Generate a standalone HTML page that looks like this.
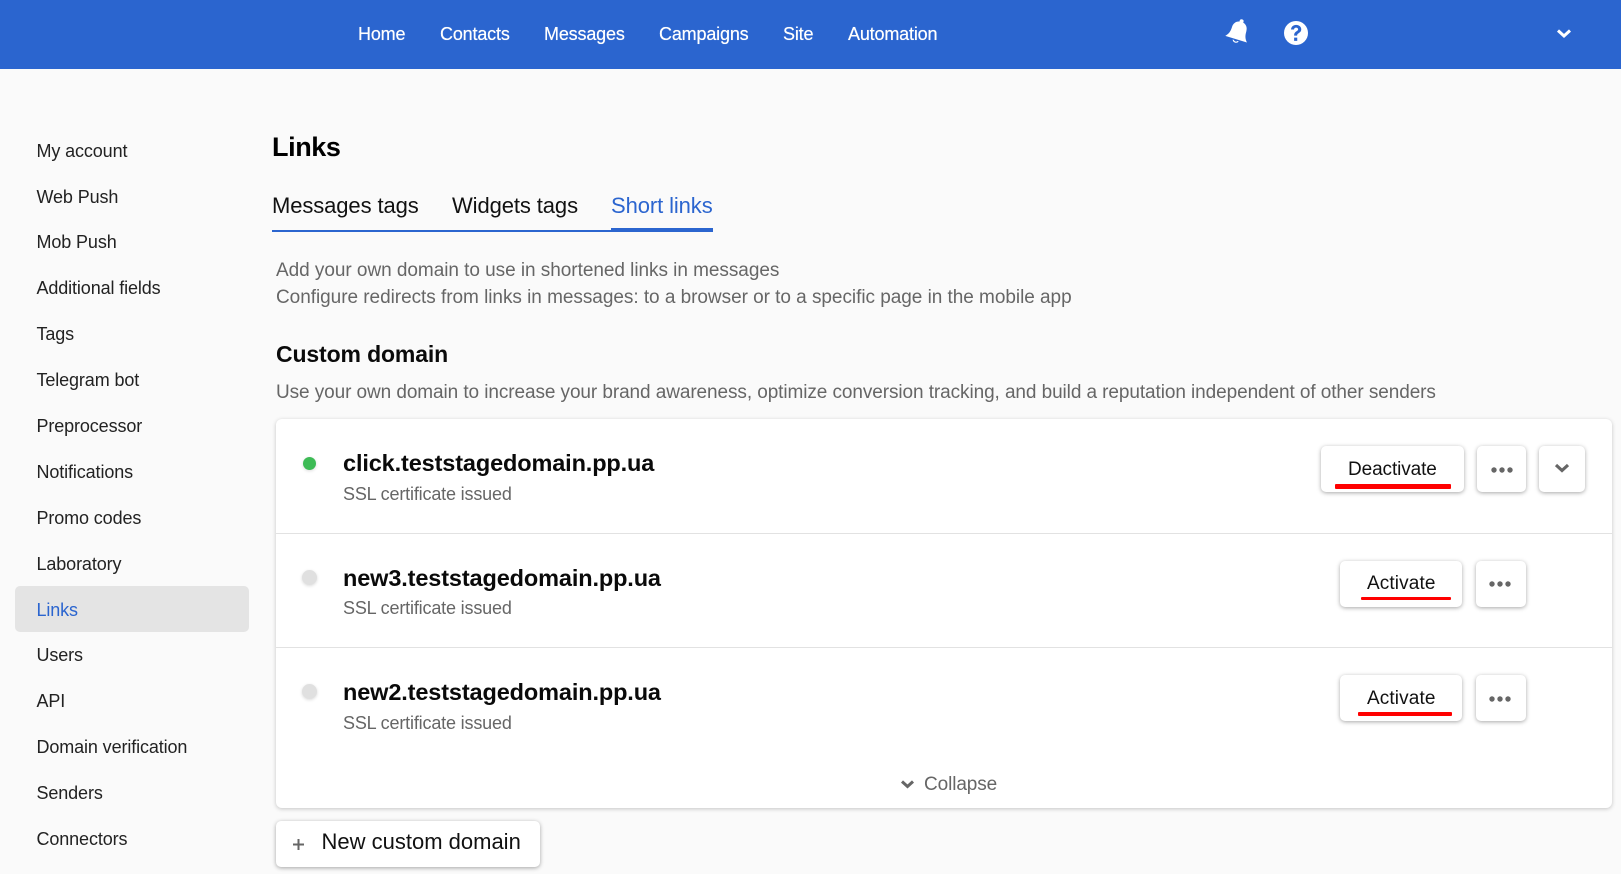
<!DOCTYPE html>
<html lang="en"><head><meta charset="utf-8"><title>Links</title>
<style>
*{box-sizing:border-box}
html,body{margin:0;padding:0}
body{width:1621px;height:874px;overflow:hidden;background:#fafafa;position:relative;font-family:"Liberation Sans",Arial,sans-serif;color:#111}
.t{position:absolute;white-space:nowrap;line-height:30px;height:30px}
.hd{position:absolute;left:0;top:0;width:1621px;height:69px;background:#2b65cf}
.n{color:#fff;font-size:18px;letter-spacing:-.17px;top:19px;text-shadow:0 0 .5px #fff}
.s{left:36.5px;font-size:18px;color:#222;letter-spacing:-.12px}
.g{color:#666;font-size:19px;left:276px}
.b{font-weight:700}
.card{position:absolute;left:276px;top:419px;width:1336px;height:389px;background:#fff;border-radius:6px;box-shadow:0 1px 4px rgba(0,0,0,.22)}
.dv{position:absolute;left:276px;width:1336px;height:1px;background:#e2e2e2}
.btn{position:absolute;height:46px;background:#fff;border-radius:5px;box-shadow:0 1px 4px rgba(0,0,0,.35)}
.dot{position:absolute;border-radius:50%;box-shadow:0 1px 3px rgba(0,0,0,.15)}
.r{position:absolute;background:#f00;border-radius:1px}
.dom{left:343px;font-size:23.5px;font-weight:700;color:#0a0a0a;letter-spacing:-.13px}
.sub{left:343px;font-size:18px;color:#666;letter-spacing:-.17px}
.bt{font-size:19px;color:#111}
.tb{font-size:22px;letter-spacing:-.1px;top:191px}
svg{position:absolute;overflow:visible}
</style></head><body>
<div class="hd"></div>
<div class="t n" style="left:358px">Home</div>
<div class="t n" style="left:440px">Contacts</div>
<div class="t n" style="left:544px">Messages</div>
<div class="t n" style="left:659px">Campaigns</div>
<div class="t n" style="left:783px">Site</div>
<div class="t n" style="left:848px">Automation</div>

<svg style="left:1224px;top:18px" width="28" height="30" viewBox="0 0 26 28"><g fill="#fff" transform="rotate(17 13 14)"><circle cx="13" cy="2.6" r="1.9"/><path d="M13 3.2c-4.6 0-7 3.2-7 7.4 0 4.700-1.500 7.200-3.600 9.400h21.200c-2.100-2.200-3.600-4.700-3.600-9.400 0-4.200-2.400-7.400-7-7.400z"/><path d="M10 21.300a3.200 3.200 0 0 0 6 0h-1.300a1.900 1.900 0 0 1-3.400 0z"/></g></svg>
<svg style="left:1284px;top:21px" width="24" height="24" viewBox="0 0 24 24"><circle cx="12" cy="12" r="12" fill="#fff"/><g transform="translate(12 12) scale(1.25) translate(-12 -12)"><path d="M8 9.200c.2-2.300 1.900-3.700 4.100-3.700 2.300 0 4.100 1.400 4.100 3.500 0 1.700-1 2.500-2.100 3.200-.9.600-1.200 1-1.200 1.900h-2.400c0-1.800.6-2.600 1.800-3.400.9-.6 1.400-1 1.400-1.700 0-.8-.7-1.300-1.600-1.300-1 0-1.600.6-1.700 1.500z" fill="#2b65cf"/><rect x="10.500" y="15.700" width="2.500" height="2.600" fill="#2b65cf"/></g></svg>
<svg style="left:1556px;top:28px" width="16" height="11" viewBox="0 0 16 11"><path d="M2 2.500l6 5.500 6-5.500" fill="none" stroke="#fff" stroke-width="3"/></svg>

<div style="position:absolute;left:15px;top:586px;width:234px;height:46px;background:#e4e4e4;border-radius:5px"></div>
<div class="t s" style="top:136px">My account</div>
<div class="t s" style="top:182px">Web Push</div>
<div class="t s" style="top:227px">Mob Push</div>
<div class="t s" style="top:273px">Additional fields</div>
<div class="t s" style="top:319px">Tags</div>
<div class="t s" style="top:365px">Telegram bot</div>
<div class="t s" style="top:411px">Preprocessor</div>
<div class="t s" style="top:457px">Notifications</div>
<div class="t s" style="top:503px">Promo codes</div>
<div class="t s" style="top:549px">Laboratory</div>
<div class="t s" style="top:595px;color:#2b65cf">Links</div>
<div class="t s" style="top:640px">Users</div>
<div class="t s" style="top:686px">API</div>
<div class="t s" style="top:732px">Domain verification</div>
<div class="t s" style="top:778px">Senders</div>
<div class="t s" style="top:824px">Connectors</div>

<div class="t b" style="left:272px;top:132px;font-size:27px;color:#000;letter-spacing:-.4px">Links</div>
<div class="t tb" style="left:272px;color:#111">Messages tags</div>
<div class="t tb" style="left:452px;color:#111">Widgets tags</div>
<div class="t tb" style="left:611px;color:#2b65cf">Short links</div>
<div style="position:absolute;left:272px;top:230px;width:340px;height:2px;background:#2b65cf"></div>
<div style="position:absolute;left:611px;top:228px;width:102px;height:4px;background:#2b65cf"></div>

<div class="t g" style="top:256px;letter-spacing:-.045px">Add your own domain to use in shortened links in messages</div>
<div class="t g" style="top:283px;letter-spacing:-.04px">Configure redirects from links in messages: to a browser or to a specific page in the mobile app</div>
<div class="t b" style="left:276px;top:339px;font-size:23px;letter-spacing:-.13px;color:#0a0a0a">Custom domain</div>
<div class="t g" style="top:378px;letter-spacing:-.085px">Use your own domain to increase your brand awareness, optimize conversion tracking, and build a reputation independent of other senders</div>

<div class="card"></div>
<div class="dv" style="top:533px"></div>
<div class="dv" style="top:647px"></div>

<div class="dot" style="left:302.500px;top:457px;width:13px;height:13px;background:#3dbb55"></div>
<div class="t dom" style="top:448px">click.teststagedomain.pp.ua</div>
<div class="t sub" style="top:479px">SSL certificate issued</div>
<div class="btn" style="left:1321px;top:446px;width:143px"></div>
<div class="t bt" style="left:1348px;top:455px;letter-spacing:-.1px">Deactivate</div>
<div class="r" style="left:1335px;top:484px;width:116px;height:5px"></div>
<div class="btn" style="left:1477px;top:446px;width:49px"></div>
<svg style="left:1490px;top:466px" width="24" height="8" viewBox="0 0 24 8"><g fill="#666"><circle cx="4" cy="4" r="2.700"/><circle cx="12" cy="4" r="2.700"/><circle cx="20" cy="4" r="2.700"/></g></svg>
<div class="btn" style="left:1539px;top:446px;width:46px"></div>
<svg style="left:1555px;top:463px" width="14" height="11" viewBox="0 0 14 11"><path d="M1 2l6 5.500 6-5.500" fill="none" stroke="#666" stroke-width="3.200"/></svg>

<div class="dot" style="left:301.500px;top:570px;width:15px;height:15px;background:#e0e0e0"></div>
<div class="t dom" style="top:563px">new3.teststagedomain.pp.ua</div>
<div class="t sub" style="top:593px">SSL certificate issued</div>
<div class="btn" style="left:1340px;top:561px;width:122px"></div>
<div class="t bt" style="left:1367px;top:569px;letter-spacing:.12px">Activate</div>
<div class="r" style="left:1361px;top:597px;width:90px;height:3px"></div>
<div class="btn" style="left:1476px;top:561px;width:50px"></div>
<svg style="left:1488px;top:580px" width="24" height="8" viewBox="0 0 24 8"><g fill="#666"><circle cx="4" cy="4" r="2.700"/><circle cx="12" cy="4" r="2.700"/><circle cx="20" cy="4" r="2.700"/></g></svg>

<div class="dot" style="left:301.500px;top:684px;width:15px;height:15px;background:#e0e0e0"></div>
<div class="t dom" style="top:677px">new2.teststagedomain.pp.ua</div>
<div class="t sub" style="top:708px">SSL certificate issued</div>
<div class="btn" style="left:1340px;top:675px;width:122px"></div>
<div class="t bt" style="left:1367px;top:684px;letter-spacing:.12px">Activate</div>
<div class="r" style="left:1358px;top:712px;width:94px;height:4px"></div>
<div class="btn" style="left:1476px;top:675px;width:50px"></div>
<svg style="left:1488px;top:695px" width="24" height="8" viewBox="0 0 24 8"><g fill="#666"><circle cx="4" cy="4" r="2.700"/><circle cx="12" cy="4" r="2.700"/><circle cx="20" cy="4" r="2.700"/></g></svg>

<svg style="left:900px;top:779px" width="15" height="11" viewBox="0 0 15 11"><path d="M2 2.500l5.500 5 5.500-5" fill="none" stroke="#666" stroke-width="3"/></svg>
<div class="t" style="left:924px;top:770px;font-size:19px;letter-spacing:-.1px;color:#666">Collapse</div>

<div class="btn" style="left:276px;top:821px;width:264px"></div>
<svg style="left:292px;top:838px" width="13" height="13" viewBox="0 0 13 13"><path d="M6.500 1v11M1 6.500h11" fill="none" stroke="#666" stroke-width="2"/></svg>
<div class="t" style="left:321.500px;top:827px;font-size:22px;color:#111">New custom domain</div>
</body></html>
